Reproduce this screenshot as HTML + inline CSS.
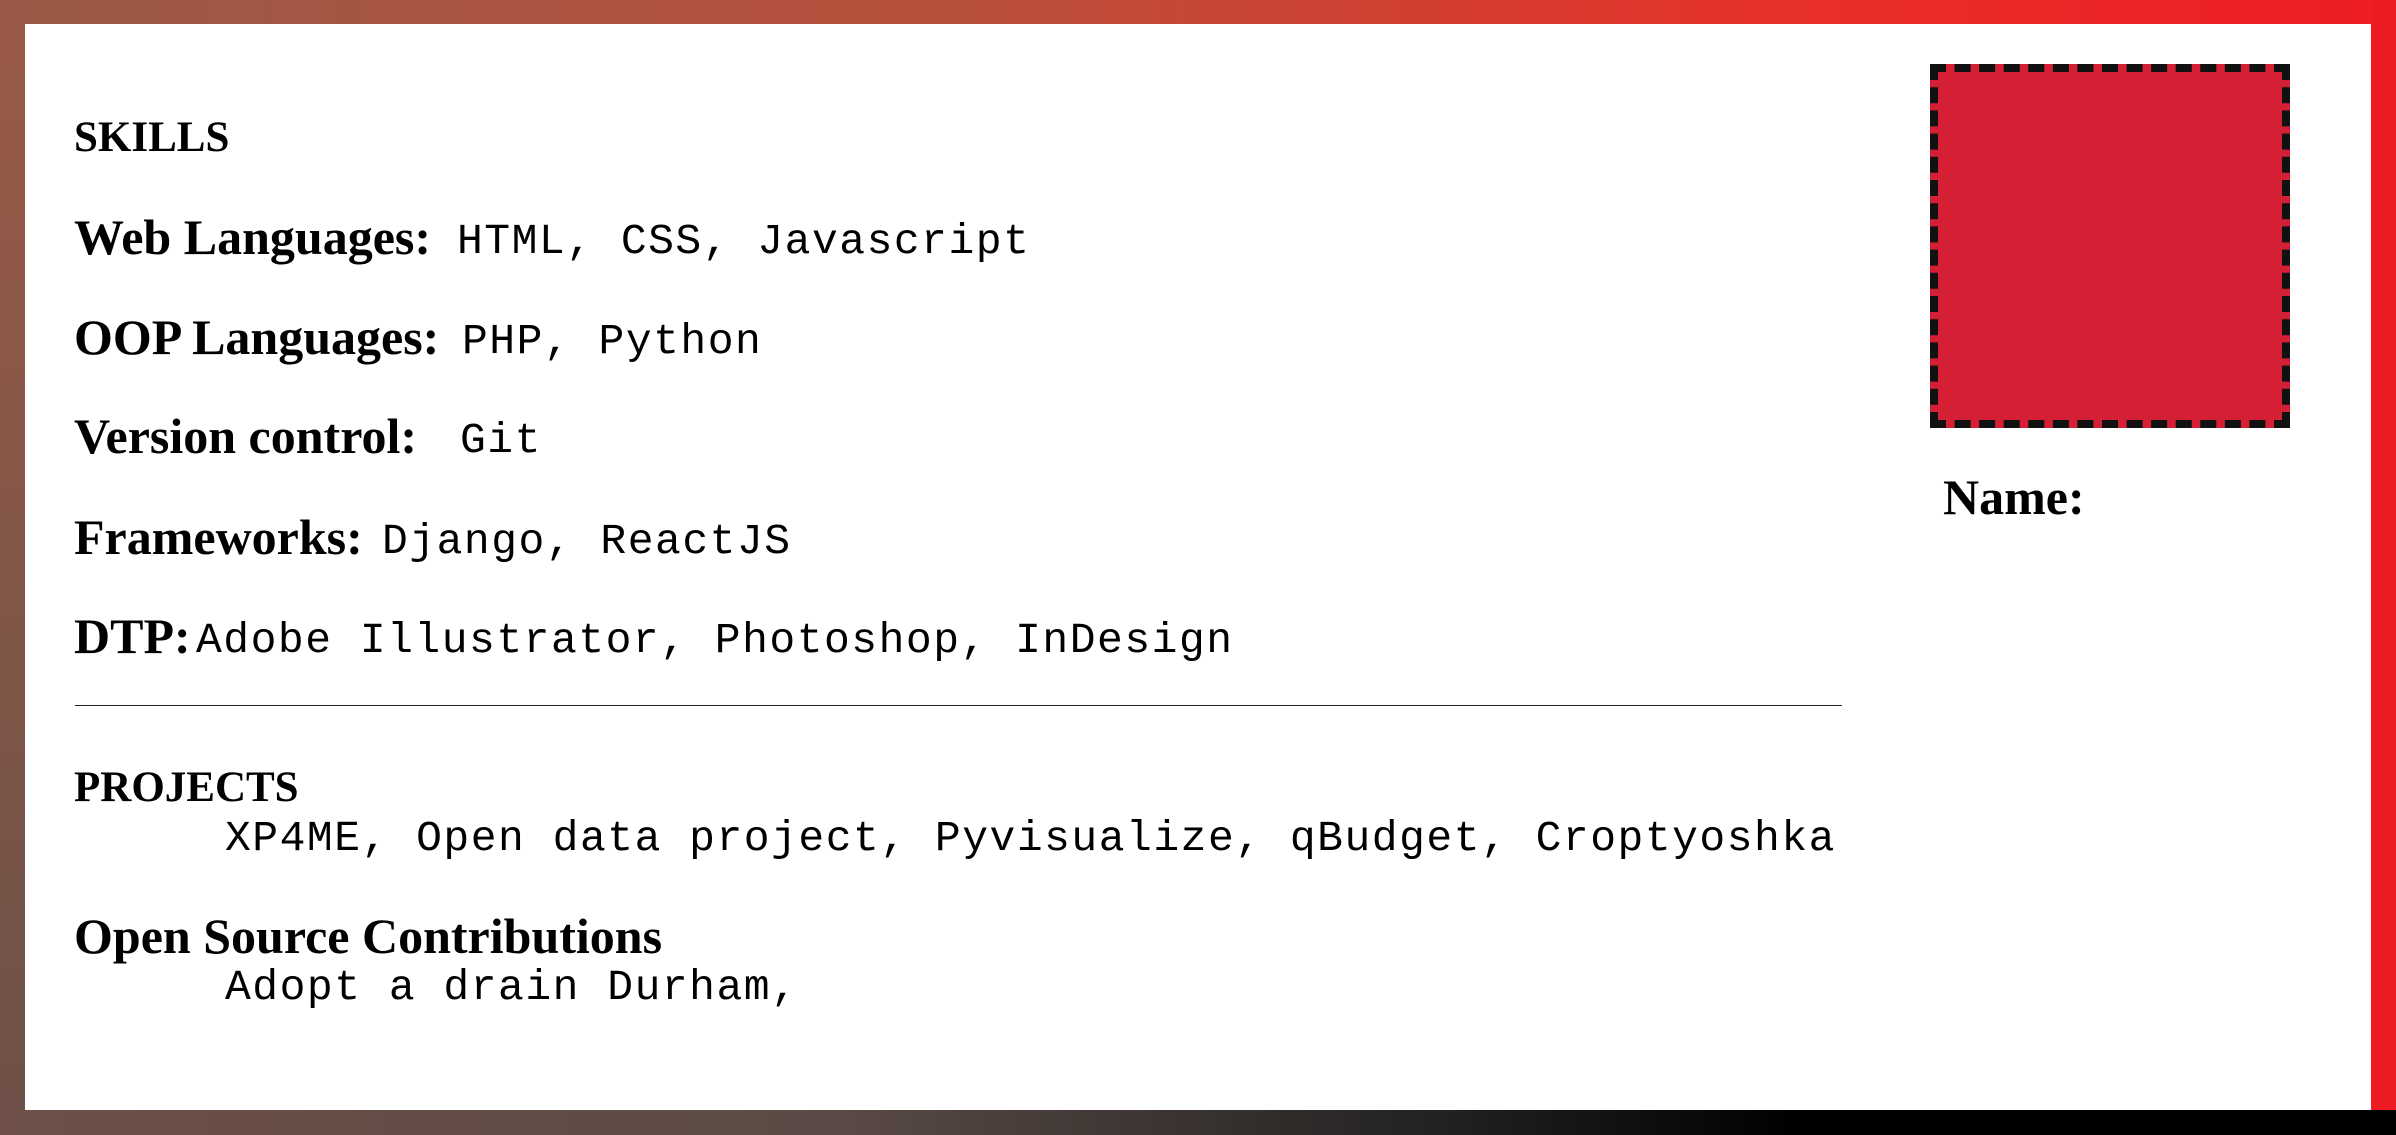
<!DOCTYPE html>
<html><head><meta charset="utf-8"><style>
html,body{margin:0;padding:0;}
body{width:2396px;height:1135px;position:relative;overflow:hidden;background:#fff;}
.b{position:absolute;}
.top{left:0;top:0;width:2396px;height:24px;background:linear-gradient(to right,#9a5a47,#b8503c 40%,#e8302a 75%,#ef1c25);}
.left{left:0;top:0;width:25px;height:1135px;background:linear-gradient(to bottom,#9a5a47,#7a5548 70%,#6e5048);}
.right{right:0;top:0;width:25px;height:1110px;background:#ed1c24;}
.bot{left:0;top:1110px;width:2396px;height:25px;background:linear-gradient(to right,#6e5048,#5a4a45 35%,#222 60%,#000 75%,#000);}
.t{position:absolute;white-space:pre;line-height:1;}
.h{font-family:"Liberation Serif",serif;font-weight:bold;font-size:50px;color:#000;}
.c{font-size:43px;}
.m{font-family:"Liberation Mono",monospace;font-size:43px;letter-spacing:1.5px;color:#000;}
.sq{position:absolute;left:1930px;top:64px;width:360px;height:364px;background:#d41f35;border:8px dashed #111;box-sizing:border-box;}
.rule{position:absolute;left:75px;top:705px;width:1767px;height:1px;background:#222;}
</style></head><body>
<div class="b top"></div><div class="b left"></div><div class="b right"></div><div class="b bot"></div>

<div class="t h c" style="left:74px;top:116px">SKILLS</div>

<div class="t h" style="left:74px;top:212px">Web Languages:</div>
<div class="t m" style="left:457px;top:220px">HTML, CSS, Javascript</div>

<div class="t h" style="left:74px;top:312px">OOP Languages:</div>
<div class="t m" style="left:462px;top:320px">PHP, Python</div>

<div class="t h" style="left:74px;top:411px">Version control:</div>
<div class="t m" style="left:460px;top:419px">Git</div>

<div class="t h" style="left:74px;top:512px">Frameworks:</div>
<div class="t m" style="left:382px;top:520px">Django, ReactJS</div>

<div class="t h" style="left:74px;top:611px">DTP:</div>
<div class="t m" style="left:196px;top:619px">Adobe Illustrator, Photoshop, InDesign</div>

<div class="rule"></div>

<div class="t h c" style="left:74px;top:766px">PROJECTS</div>
<div class="t m" style="left:225px;top:817px">XP4ME, Open data project, Pyvisualize, qBudget, Croptyoshka</div>

<div class="t h" style="left:74px;top:911px">Open Source Contributions</div>
<div class="t m" style="left:225px;top:966px">Adopt a drain Durham,</div>

<div class="sq"></div>
<div class="t h" style="left:1943px;top:472px">Name:</div>
</body></html>
